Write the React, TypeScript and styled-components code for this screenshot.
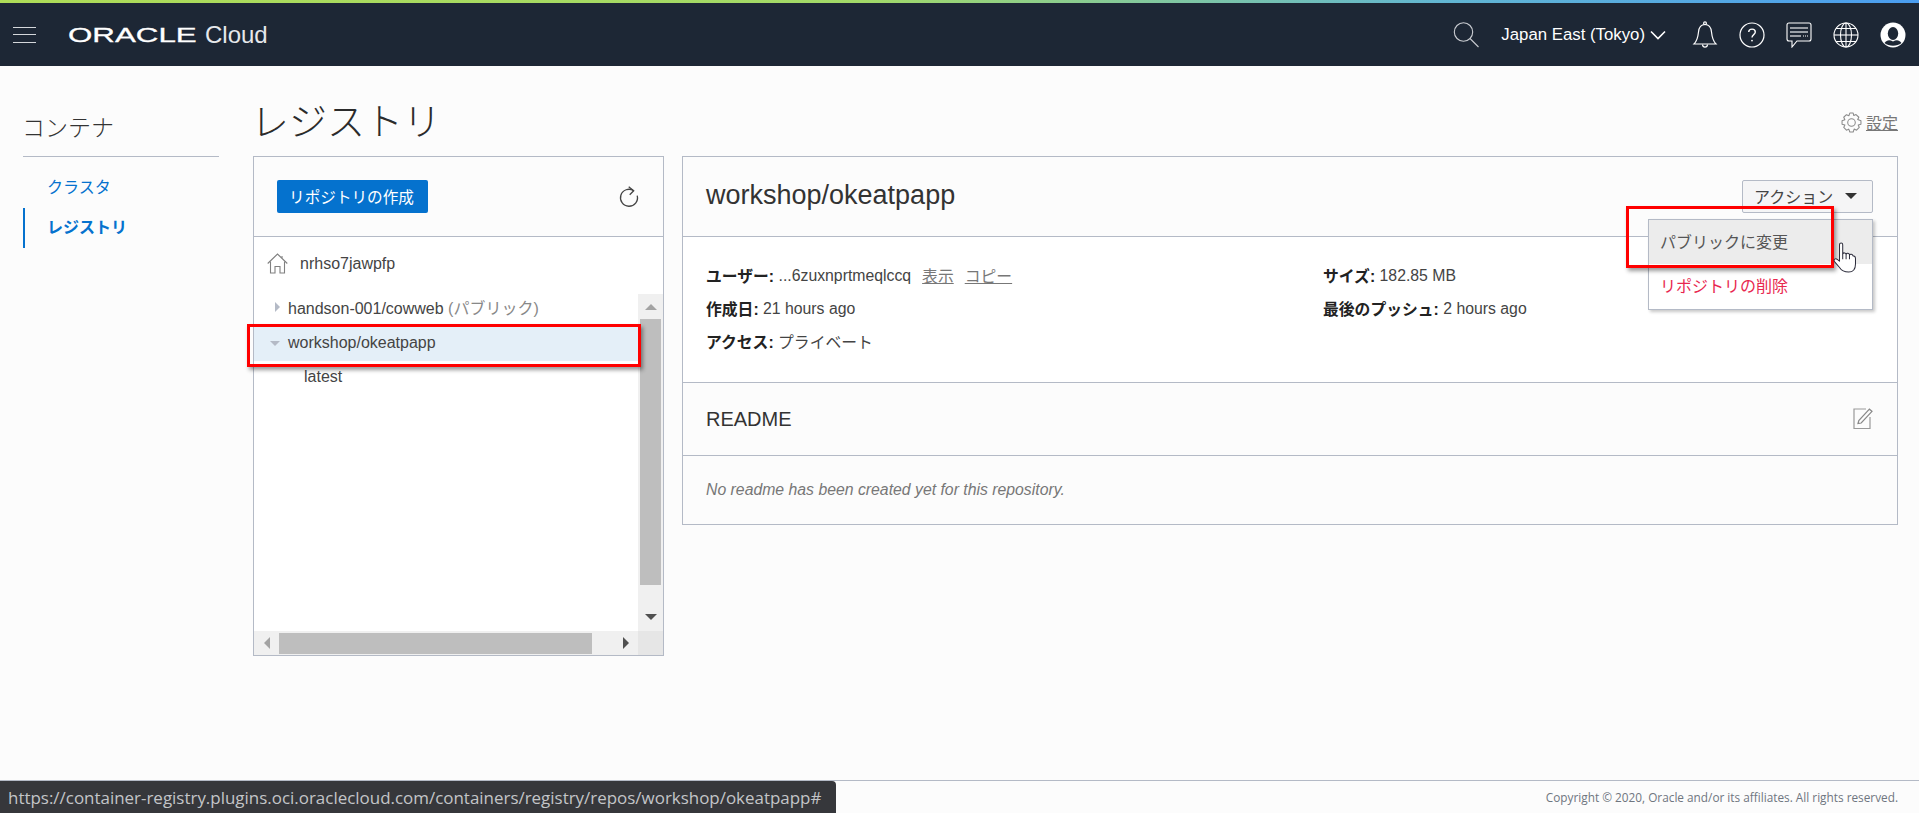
import React from "react";
import styled, { createGlobalStyle } from "styled-components";

const FONT = `"Liberation Sans", "Noto Sans CJK JP", sans-serif`;

const GlobalStyle = createGlobalStyle`
  html, body {
    margin: 0;
    padding: 0;
    height: 100%;
    overflow: hidden;
    background: #fcfcfc;
    font-family: ${FONT};
    color: #333;
  }
`;

const Page = styled.div`
  position: relative;
  display: flex;
  flex-direction: column;
  height: 813px;
`;

/* ---- top bar ---- */

const TopBar = styled.header`
  flex: none;
  display: flex;
  align-items: center;
  height: 63px;
  border-top: 3px solid;
  border-image: linear-gradient(90deg, #aedc58, #a2d968 45%, #62b6d2 75%, #4a9df0) 1;
  background: #1d2735;
  color: #fff;
  padding: 0 13px;
`;

const Burger = styled.div`
  width: 23px;
  height: 16px;
  display: flex;
  flex-direction: column;
  justify-content: space-between;
  margin-right: 32px;

  span {
    display: block;
    height: 1px;
    background: #d4d7db;
  }
`;

const OracleMark = styled.span`
  display: inline-block;
  width: 86px;
  margin-right: 51px;
  font-size: 21px;
  line-height: 21px;
  white-space: nowrap;
  transform: scaleX(1.49);
  transform-origin: left center;
  -webkit-text-stroke: 0.3px #fff;
`;

const CloudMark = styled.span`
  font-size: 24px;
  color: #e6e8eb;
`;

const TopRight = styled.div`
  margin-left: auto;
  display: flex;
  align-items: center;
`;

const SearchButton = styled.span`
  display: flex;
  margin-right: 22px;
`;

const Region = styled.div`
  display: flex;
  align-items: center;
  gap: 5px;
  font-size: 16.8px;
  margin-right: 26px;
`;

const TopIcons = styled.div`
  display: flex;
  align-items: center;
  gap: 21px;
`;

/* ---- page body ---- */

const Main = styled.main`
  flex: 1;
  display: flex;
  min-height: 0;
  padding: 0 21px 0 23px;
`;

const Sidebar = styled.nav`
  flex: none;
  width: 196px;
  margin-right: 34px;
`;

const SideTitle = styled.div`
  height: 91px;
  box-sizing: border-box;
  display: flex;
  align-items: flex-end;
  padding-bottom: 12px;
  border-bottom: 1px solid #b4bac6;
  font-size: 23px;
  line-height: 32px;
  font-weight: 300;
  color: #333;
  text-indent: -1px;
`;

const SideList = styled.div`
  display: flex;
  flex-direction: column;
  gap: 2px;
  margin-top: 9px;
`;

const SideItem = styled.a<{ $active?: boolean }>`
  display: flex;
  align-items: center;
  height: 40px;
  box-sizing: border-box;
  padding-left: 22px;
  padding-bottom: ${(p) => (p.$active ? 4 : 0)}px;
  font-size: 16px;
  color: #0572ce;
  font-weight: ${(p) => (p.$active ? 700 : 400)};
  border-left: 2px solid ${(p) => (p.$active ? "#0572ce" : "transparent")};
`;

const Content = styled.div`
  flex: 1;
  min-width: 0;
`;

const TitleRow = styled.div`
  display: flex;
  align-items: flex-start;
  justify-content: space-between;
  height: 90px;
`;

const PageTitle = styled.h1`
  margin: 34px 0 0 -2px;
  font-size: 38px;
  line-height: 44px;
  font-weight: 300;
  color: #2b2b2b;
`;

const SettingsLink = styled.a`
  display: flex;
  align-items: center;
  gap: 4px;
  margin-top: 44px;
  font-size: 16px;
  color: #777;
  text-decoration: underline;
`;

const Panels = styled.div`
  display: grid;
  grid-template-columns: 411px 1fr;
  gap: 18px;
  align-items: start;
`;

const Panel = styled.section<{ $height: number }>`
  height: ${(p) => p.$height}px;
  box-sizing: border-box;
  display: flex;
  flex-direction: column;
  border: 1px solid #b4bac6;
  background: #fff;
`;

const PanelHeader = styled.div<{ $height?: number; $right?: number }>`
  flex: none;
  display: flex;
  align-items: center;
  justify-content: space-between;
  height: ${(p) => p.$height ?? 80}px;
  box-sizing: border-box;
  padding: 0 ${(p) => p.$right ?? 24}px 0 23px;
  background: #fcfcfc;
  border-bottom: 1px solid #b4bac6;
`;

const CreateButton = styled.button`
  width: 151px;
  height: 33px;
  padding: 0 2px 2px 0;
  border: none;
  border-radius: 2px;
  background: #0572ce;
  color: #fff;
  font-family: ${FONT};
  font-size: 15.6px;
`;

const RootRow = styled.div`
  flex: none;
  display: flex;
  align-items: center;
  gap: 12px;
  height: 57px;
  box-sizing: border-box;
  padding: 0 0 4px 13px;
  font-size: 16px;
  color: #444;
`;

const TreeFrame = styled.div`
  flex: 1;
  min-height: 0;
  display: grid;
  grid-template-columns: 1fr 25px;
  grid-template-rows: 1fr 24px;
`;

const Tree = styled.div`
  position: relative;
`;

const TreeRow = styled.div<{ $selected?: boolean; $indent?: number; $height: number; $lift?: number }>`
  position: relative;
  display: flex;
  align-items: center;
  gap: 8px;
  height: ${(p) => p.$height}px;
  box-sizing: border-box;
  padding-left: ${(p) => p.$indent ?? 18}px;
  padding-bottom: ${(p) => p.$lift ?? 0}px;
  font-size: 16px;
  color: #444;
  background: ${(p) => (p.$selected ? "#e4eff8" : "transparent")};
`;

const Muted = styled.span`
  color: #888;
`;

const ARROW_COLOR_SIDE = { up: "bottom", down: "top", left: "right", right: "left" };
const ARROW_ZERO_SIDE = { up: "top", down: "bottom", left: "left", right: "right" };

const Arrow = styled.span<{ $dir: "up" | "down" | "left" | "right"; $color: string; $size?: number }>`
  display: inline-block;
  flex: none;
  width: 0;
  height: 0;
  border-style: solid;
  border-color: transparent;
  border-width: ${(p) => p.$size ?? 5}px;
  ${(p) => `border-${ARROW_COLOR_SIDE[p.$dir]}-color: ${p.$color};`}
  ${(p) => `border-${ARROW_ZERO_SIDE[p.$dir]}-width: 0;`}
`;

const VTrack = styled.div`
  display: flex;
  flex-direction: column;
  align-items: center;
  background: #f0f0f0;
`;

const HTrack = styled.div`
  display: flex;
  align-items: center;
  background: #f0f0f0;
`;

const ScrollButton = styled.span<{ $lift?: number }>`
  flex: none;
  width: 25px;
  height: 25px;
  box-sizing: border-box;
  padding-bottom: ${(p) => p.$lift ?? 0}px;
  display: flex;
  align-items: center;
  justify-content: center;
`;

const VThumb = styled.div`
  flex: none;
  width: 21px;
  height: 266px;
  background: #bebebe;
`;

const HThumb = styled.div`
  flex: none;
  width: 313px;
  height: 21px;
  background: #bebebe;
`;

const Spacer = styled.div`
  flex: 1;
`;

const Corner = styled.div`
  background: #e6e6e6;
`;

const RepoTitle = styled.h2`
  margin: 0 0 3px;
  font-size: 27px;
  font-weight: 400;
  color: #333;
`;

const ActionWrap = styled.div`
  position: relative;
`;

const ActionButton = styled.button`
  display: flex;
  align-items: center;
  justify-content: space-between;
  width: 131px;
  height: 33px;
  box-sizing: border-box;
  padding: 0 15px 2px 11px;
  border: 1px solid #b4bac6;
  border-radius: 2px;
  background: #f5f5f6;
  color: #444;
  font-family: ${FONT};
  font-size: 16px;
`;

const Menu = styled.div`
  position: absolute;
  z-index: 2;
  top: 39px;
  right: 0;
  width: 225px;
  box-sizing: border-box;
  height: 91px;
  border: 1px solid #b4bac6;
  background: #fff;
  box-shadow: 2px 2px 3px rgba(0, 0, 0, 0.22);
`;

const MenuItem = styled.div<{ $hover?: boolean; $danger?: boolean }>`
  display: flex;
  align-items: center;
  height: 44px;
  box-sizing: border-box;
  padding: 0 0 3px 11px;
  font-size: 16px;
  color: ${(p) => (p.$danger ? "#e8274f" : "#555")};
  background: ${(p) => (p.$hover ? "#ececec" : "transparent")};
`;

const Callout = styled.div<{ $top: number; $left: number; $width: number; $height: number }>`
  position: absolute;
  z-index: 3;
  top: ${(p) => p.$top}px;
  left: ${(p) => p.$left}px;
  width: ${(p) => p.$width}px;
  height: ${(p) => p.$height}px;
  box-sizing: border-box;
  border: 3px solid #f00;
  box-shadow: 2px 3px 4px rgba(0, 0, 0, 0.4);
  pointer-events: none;
`;

const HandCursor = styled.svg`
  position: absolute;
  z-index: 4;
  top: 22px;
  left: 184px;
  stroke: #2b2b3a;
  stroke-width: 1.1;
  stroke-linejoin: round;
  fill: #fff;
`;

const DetailBody = styled.div`
  flex: none;
  height: 146px;
  box-sizing: border-box;
  padding: 22px 23px 0;
  display: grid;
  grid-template-columns: 617px 1fr;
  align-content: start;
  border-bottom: 1px solid #b4bac6;
  background: #fff;
`;

const DetailColumn = styled.div`
  display: flex;
  flex-direction: column;
`;

const DetailRow = styled.div`
  height: 33px;
  display: flex;
  align-items: center;
  white-space: pre;
  font-size: 15.8px;
  color: #444;

  b {
    color: #222;
  }
`;

const PlainLink = styled.a`
  margin-left: 11px;
  color: #777;
  text-decoration: underline;
`;

const ReadmeTitle = styled.h3`
  margin: 0;
  font-size: 20px;
  font-weight: 400;
  color: #333;
`;

const ReadmeBody = styled.div`
  flex: 1;
  display: flex;
  align-items: center;
  padding-left: 23px;
  font-size: 15.8px;
  font-style: italic;
  color: #777;
  background: #fcfcfc;
`;

const Footer = styled.footer`
  flex: none;
  height: 33px;
  box-sizing: border-box;
  display: flex;
  align-items: center;
  justify-content: flex-end;
  padding-right: 21px;
  border-top: 1px solid #b4bac6;
  font-family: "Open Sans", sans-serif;
  font-size: 11.8px;
  color: #6f7680;
`;

const StatusBubble = styled.div`
  position: absolute;
  z-index: 5;
  left: 0;
  bottom: 0;
  width: 836px;
  height: 32px;
  box-sizing: border-box;
  padding-left: 8px;
  display: flex;
  align-items: center;
  border-top-right-radius: 4px;
  background: #36373b;
  color: #c3c5c8;
  font-family: "Open Sans", sans-serif;
  font-size: 16.95px;
  white-space: nowrap;
`;

/* ---- drawings ---- */

const SearchIcon = () => (
  <svg width="26" height="26" viewBox="0 0 26 26" fill="none" stroke="#c9ccd1" strokeWidth="1.1">
    <circle cx="10.5" cy="10" r="9.2" />
    <line x1="17" y1="16.5" x2="25.5" y2="25" />
  </svg>
);

const Chevron = () => (
  <svg width="16" height="10" viewBox="0 0 16 10" fill="none" stroke="#fff" strokeWidth="1.6">
    <path d="M1 1.5 L8 8.5 L15 1.5" />
  </svg>
);

const BellIcon = () => (
  <svg width="26" height="28" viewBox="0 0 26 28" fill="none" stroke="#fff" strokeWidth="1.2">
    <path d="M2 23 C5 20 6 16 6.5 11 C7 6 9.5 3.5 13 3.5 C16.5 3.5 19 6 19.5 11 C20 16 21 20 24 23 Z" />
    <circle cx="13" cy="2.2" r="1.4" />
    <path d="M10.5 23.5 C10.8 27 15.2 27 15.5 23.5" />
  </svg>
);

const HelpIcon = () => (
  <svg width="26" height="26" viewBox="0 0 26 26" fill="none" stroke="#fff" strokeWidth="1.2">
    <circle cx="13" cy="13" r="12" />
    <path d="M9.7 10 C9.8 6.2 16.3 6.2 16.3 10 C16.3 12.6 13 12.6 13 15.4" strokeWidth="1.4" />
    <circle cx="13" cy="18.6" r="0.9" fill="#fff" stroke="none" />
  </svg>
);

const ChatIcon = () => (
  <svg width="26" height="26" viewBox="0 0 26 26" fill="none" stroke="#fff" strokeWidth="1.1">
    <path d="M3 1 H23 C24.2 1 25 1.8 25 3 V17 C25 18.2 24.2 19 23 19 H11 L6 25 V19 H3 C1.8 19 1 18.2 1 17 V3 C1 1.8 1.8 1 3 1 Z" />
    <line x1="4" y1="6" x2="22" y2="6" />
    <line x1="4" y1="10" x2="22" y2="10" stroke="#9aa0a8" strokeWidth="2" />
    <line x1="4" y1="14" x2="15" y2="14" />
    <line x1="17" y1="14" x2="22" y2="14" strokeDasharray="1 1" />
  </svg>
);

const GlobeIcon = () => (
  <svg width="26" height="26" viewBox="0 0 26 26" fill="none" stroke="#fff" strokeWidth="1.1">
    <circle cx="13" cy="13" r="12" />
    <ellipse cx="13" cy="13" rx="5.5" ry="12" />
    <line x1="13" y1="1" x2="13" y2="25" />
    <line x1="1" y1="13" x2="25" y2="13" />
    <path d="M3 6.5 H23 M3 19.5 H23" />
  </svg>
);

const AvatarIcon = () => (
  <svg width="26" height="26" viewBox="0 0 26 26">
    <circle cx="13" cy="13" r="12.5" fill="#fff" />
    <ellipse cx="13" cy="11.5" rx="5.2" ry="6.5" fill="#1d2735" />
    <path d="M4.5 21 C7 17.8 9.5 17.5 13 19.5 C16.5 17.5 19 17.8 21.5 21 C17 24.5 9 24.5 4.5 21 Z" fill="#1d2735" />
  </svg>
);

const GearIcon = () => (
  <svg width="21" height="21" viewBox="0 0 20 20" fill="none" stroke="#8a8a8a" strokeWidth="1">
    <circle cx="10" cy="10" r="3.6" />
    <path d="M8.4 1 H11.6 L12.2 3.4 L14.3 2.4 L17 5 L15.9 7.1 L19 8.3 V11.7 L16.4 12.4 L17.4 14.7 L14.8 17.3 L12.6 16.2 L11.6 19 H8.4 L7.4 16.3 L5.2 17.3 L2.6 14.7 L3.7 12.4 L1 11.7 V8.3 L3.7 7.3 L2.6 5 L5.2 2.6 L7.5 3.6 Z" strokeLinejoin="round" />
  </svg>
);

const RefreshIcon = () => (
  <svg width="22" height="22" viewBox="-1 -2 22 22" fill="none" stroke="#444" strokeWidth="1.3">
    <path d="M14.7 2.7 A8.5 8.5 0 1 0 18.2 7.6" />
    <path d="M9.7 -1.3 L14.7 2.7 L10.7 6.7" />
  </svg>
);

const HomeIcon = () => (
  <svg width="21" height="21" viewBox="0 0 21 21" fill="none" stroke="#808080" strokeWidth="1.1">
    <path d="M0.7 10.5 L10.5 1 L20.3 10.5" />
    <path d="M3.5 8.5 V20 H8 V13.5 H13 V20 H17.5 V8.5" />
    <path d="M15 3 V5" />
  </svg>
);

const EditIcon = () => (
  <svg width="20" height="22" viewBox="0 0 20 22" fill="none" stroke="#999" strokeWidth="1.2">
    <path d="M13 1 H1 V20.5 H17 V9" />
    <path d="M5 15.5 L5.8 12.6 L16.4 1.2 L19 3.4 L8.2 15 Z" stroke="#888" fill="#fcfcfc" />
  </svg>
);

const HandIcon = () => (
  <HandCursor width="24" height="31" viewBox="0 0 26 34">
    <path d="M7 21 L7 3 C7 0.5 10.5 0.5 10.5 3 V13 C11 11.5 14 11.5 14.2 13.5 C14.8 12 17.6 12 17.9 14.2 C18.6 13 21.6 13 21.8 15.4 C22.5 15 24.5 15.5 24.5 18 V24 C24.5 29 22 32.8 17 33 C12 33 9.5 32 7 28 L1.5 21.5 C0 19 2.5 17.5 4.5 19 Z" />
    <path d="M10.5 13 V19 M14.2 13.5 V19 M17.9 14.2 V19" fill="none" />
  </HandCursor>
);

export default function App() {
  return (
    <Page>
      <GlobalStyle />
      <TopBar>
        <Burger>
          <span />
          <span />
          <span />
        </Burger>
        <OracleMark>ORACLE</OracleMark>
        <CloudMark>Cloud</CloudMark>
        <TopRight>
          <SearchButton>
            <SearchIcon />
          </SearchButton>
          <Region>
            Japan East (Tokyo)
            <Chevron />
          </Region>
          <TopIcons>
            <BellIcon />
            <HelpIcon />
            <ChatIcon />
            <GlobeIcon />
            <AvatarIcon />
          </TopIcons>
        </TopRight>
      </TopBar>

      <Main>
        <Sidebar>
          <SideTitle>コンテナ</SideTitle>
          <SideList>
            <SideItem>クラスタ</SideItem>
            <SideItem $active>レジストリ</SideItem>
          </SideList>
        </Sidebar>

        <Content>
          <TitleRow>
            <PageTitle>レジストリ</PageTitle>
            <SettingsLink>
              <GearIcon />
              設定
            </SettingsLink>
          </TitleRow>

          <Panels>
            <Panel $height={500}>
              <PanelHeader $right={23}>
                <CreateButton>リポジトリの作成</CreateButton>
                <RefreshIcon />
              </PanelHeader>
              <RootRow>
                <HomeIcon />
                nrhso7jawpfp
              </RootRow>
              <TreeFrame>
                <Tree>
                  <TreeRow $height={33} $lift={7} $indent={21}>
                    <Arrow $dir="right" $color="#b4bac6" />
                    <span>
                      handson-001/cowweb <Muted>(パブリック)</Muted>
                    </span>
                  </TreeRow>
                  <TreeRow $height={34} $lift={2} $selected $indent={16}>
                    <Arrow $dir="down" $color="#b4bac6" />
                    workshop/okeatpapp
                    <Callout $top={-3} $left={-7} $width={394} $height={43} />
                  </TreeRow>
                  <TreeRow $height={32} $indent={50}>
                    latest
                  </TreeRow>
                </Tree>
                <VTrack>
                  <ScrollButton>
                    <Arrow $dir="up" $color="#a3a3a3" $size={6} />
                  </ScrollButton>
                  <VThumb />
                  <Spacer />
                  <ScrollButton $lift={4}>
                    <Arrow $dir="down" $color="#505050" $size={6} />
                  </ScrollButton>
                </VTrack>
                <HTrack>
                  <ScrollButton>
                    <Arrow $dir="left" $color="#a3a3a3" $size={6} />
                  </ScrollButton>
                  <HThumb />
                  <Spacer />
                  <ScrollButton>
                    <Arrow $dir="right" $color="#505050" $size={6} />
                  </ScrollButton>
                </HTrack>
                <Corner />
              </TreeFrame>
            </Panel>

            <Panel $height={369}>
              <PanelHeader>
                <RepoTitle>workshop/okeatpapp</RepoTitle>
                <ActionWrap>
                  <ActionButton>
                    アクション
                    <Arrow $dir="down" $color="#333" $size={6} />
                  </ActionButton>
                  <Menu>
                    <MenuItem $hover>パブリックに変更</MenuItem>
                    <MenuItem $danger>リポジトリの削除</MenuItem>
                    <Callout $top={-14} $left={-23} $width={208} $height={62} />
                    <HandIcon />
                  </Menu>
                </ActionWrap>
              </PanelHeader>
              <DetailBody>
                <DetailColumn>
                  <DetailRow>
                    <b>ユーザー:</b> ...6zuxnprtmeqlccq
                    <PlainLink>表示</PlainLink>
                    <PlainLink>コピー</PlainLink>
                  </DetailRow>
                  <DetailRow>
                    <b>作成日:</b> 21 hours ago
                  </DetailRow>
                  <DetailRow>
                    <b>アクセス:</b> プライベート
                  </DetailRow>
                </DetailColumn>
                <DetailColumn>
                  <DetailRow>
                    <b>サイズ:</b> 182.85 MB
                  </DetailRow>
                  <DetailRow>
                    <b>最後のプッシュ:</b> 2 hours ago
                  </DetailRow>
                </DetailColumn>
              </DetailBody>
              <PanelHeader $height={73}>
                <ReadmeTitle>README</ReadmeTitle>
                <EditIcon />
              </PanelHeader>
              <ReadmeBody>No readme has been created yet for this repository.</ReadmeBody>
            </Panel>
          </Panels>
        </Content>
      </Main>

      <Footer>Copyright © 2020, Oracle and/or its affiliates. All rights reserved.</Footer>
      <StatusBubble>https://container-registry.plugins.oci.oraclecloud.com/containers/registry/repos/workshop/okeatpapp#</StatusBubble>
    </Page>
  );
}
